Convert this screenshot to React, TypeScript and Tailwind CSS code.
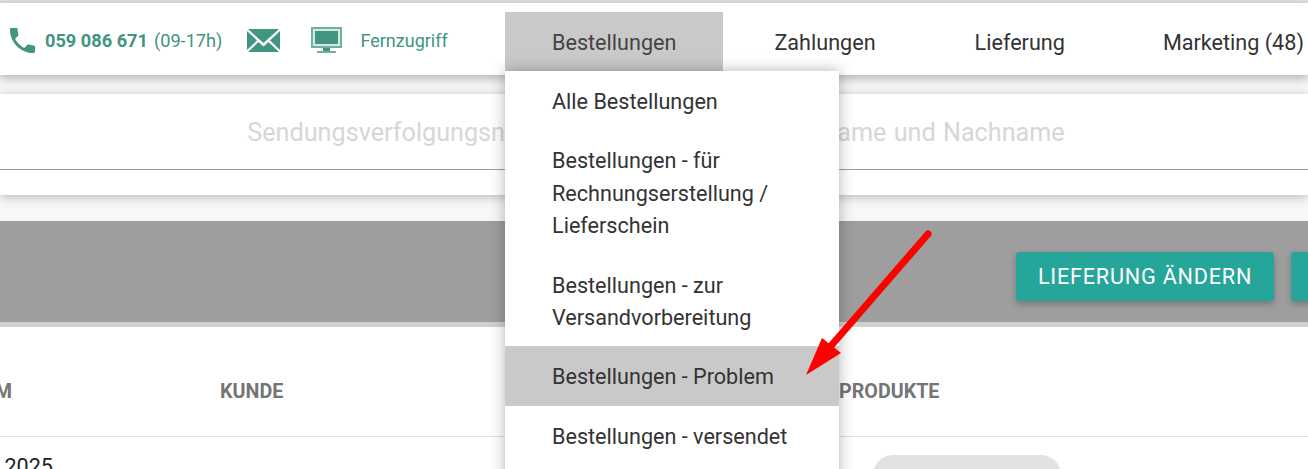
import React from 'react';

const menuItems = [
    { label: ['Alle Bestellungen'], pad: 'pt-[15px] pb-[13px] leading-[32px]' },
    { label: ['Bestellungen - für', 'Rechnungserstellung /', 'Lieferschein'], pad: 'pt-[14px] pb-[12.5px] leading-[32.5px]' },
    { label: ['Bestellungen - zur', 'Versandvorbereitung'], pad: 'pt-[15px] pb-[12px] leading-[32px]' },
    { label: ['Bestellungen - Problem'], pad: 'pt-[15px] pb-[13px] leading-[32px]', active: true },
    { label: ['Bestellungen - versendet'], pad: 'pt-[15px] pb-[13px] leading-[32px]' },
];

function PhoneIcon() {
    return (
        <svg viewBox="3 3 18 18" className="-mt-[1px] w-[25px] h-[25px] fill-[#419581]">
            <path d="M6.62 10.79c1.44 2.83 3.76 5.14 6.59 6.59l2.2-2.2c.27-.27.67-.36 1.02-.24 1.12.37 2.33.57 3.57.57.55 0 1 .45 1 1V20c0 .55-.45 1-1 1-9.39 0-17-7.61-17-17 0-.55.45-1 1-1h3.5c.55 0 1 .45 1 1 0 1.25.2 2.45.57 3.57.11.35.03.74-.25 1.02l-2.2 2.2z" />
        </svg>
    );
}

function MailIcon() {
    return (
        <svg viewBox="0 0 33 25" className="w-[33px] h-[25px] fill-[#419581]">
            <path d="M1 1h31L16.5 15z" />
            <path d="M0 3l10 9.5L0 22z" />
            <path d="M33 3L23 12.5 33 22z" />
            <path d="M11.5 14l5 4.5 5-4.5L32 24H1z" />
        </svg>
    );
}

function MonitorIcon() {
    return (
        <svg viewBox="0 0 31 26" className="-mt-[2px] w-[31px] h-[26px]">
            <rect x="0" y="0" width="31" height="21" fill="#6fb0a0" />
            <rect x="2" y="2" width="27" height="17" fill="#d6e8e3" />
            <rect x="4" y="4" width="23" height="13" fill="#419581" />
            <rect x="12" y="21" width="7" height="3" fill="#419581" />
            <rect x="6" y="24" width="19" height="2" fill="#6fb0a0" />
        </svg>
    );
}

export default function App() {
    return (
        <div className="relative h-[469px] overflow-hidden bg-[#f7f7f7] font-['Roboto',sans-serif] text-[#333]">
            <div className="h-[3px] bg-[#e2e2e2]" />

            <header className="relative z-10 flex h-[72px] bg-white shadow-[0_3px_10px_rgba(0,0,0,0.3)]">
                <div className="flex w-[505px] shrink-0 items-center pl-[10px] pt-[3px] text-[18.2px] text-[#419581]">
                    <PhoneIcon />
                    <span className="ml-[10px] font-bold whitespace-nowrap">059 086 671</span>
                    <span className="ml-[6px] whitespace-nowrap">(09-17h)</span>
                    <span className="ml-[25px]"><MailIcon /></span>
                    <span className="ml-[31px]"><MonitorIcon /></span>
                    <span className="ml-[18px] text-[18px] whitespace-nowrap">Fernzugriff</span>
                </div>

                <nav className="flex shrink-0 gap-[5px] text-[21.6px] whitespace-nowrap">
                    <div className="relative -mr-[5px] mt-[9px] h-[59px] bg-[#c9c9c9] px-[47px] leading-[62px] text-[#444]">
                        Bestellungen
                        <ul className="absolute left-0 top-[59px] z-20 h-[420px] w-[334px] bg-white text-[#333] shadow-[0_0_14px_rgba(0,0,0,0.3)]">
                            {menuItems.map((item) => (
                                <li key={item.label[0]} className={`px-[47px] ${item.pad} ${item.active ? 'bg-[#c9c9c9]' : ''}`}>
                                    {item.label.map((line) => (
                                        <div key={line}>{line}</div>
                                    ))}
                                </li>
                            ))}
                        </ul>
                    </div>
                    <div className="ml-[4px] px-[47px] pt-[9px] leading-[62px]">Zahlungen</div>
                    <div className="px-[47px] pt-[9px] leading-[62px]">Lieferung</div>
                    <div className="-ml-[1px] px-[47px] pt-[9px] leading-[62px]">Marketing (48)</div>
                </nav>
            </header>

            <div className="mt-[19px] h-[101px] bg-white pt-[15px] shadow-[0_2px_10px_rgba(0,0,0,0.25)]">
                <input
                    readOnly
                    placeholder="Sendungsverfolgungsnummer, Kundennummer, Vorname und Nachname"
                    className="block h-[61px] w-full border-b border-[#9e9e9e] bg-transparent pb-[13px] pl-[4px] text-center text-[25.2px] [word-spacing:1px] outline-none placeholder:text-[#d6d6d6]"
                />
            </div>

            <div className="relative mt-[26px] flex h-[101px] items-start justify-end gap-[17px] bg-[#9e9e9e] pt-[31px]">
                <button className="h-[49px] w-[258px] shrink-0 rounded-[3px] bg-[#26a69a] pt-[2px] text-[21.6px] tracking-[0.8px] text-white uppercase shadow-[0_3px_6px_rgba(0,0,0,0.25)]">
                    Lieferung ändern
                </button>
                <button className="-mr-[241px] h-[49px] w-[258px] shrink-0 rounded-[3px] bg-[#26a69a] shadow-[0_3px_6px_rgba(0,0,0,0.25)]" />
            </div>
            <div className="h-[5px] bg-[#d0d0d0]" />

            <div className="bg-white">
                <div className="flex h-[110px] items-center border-b border-[#e2e2e2] pt-[21px] text-[19.7px] font-bold text-[#757575] uppercase">
                    <div className="flex w-[220px] shrink-0 justify-end pr-[208px] whitespace-nowrap">Datum</div>
                    <div className="w-[619px] shrink-0">Kunde</div>
                    <div>Produkte</div>
                </div>
                <div className="relative flex h-[40px] pt-[18px] text-[21.6px] leading-[24px] text-[#222]">
                    <div className="flex w-[220px] shrink-0 justify-end pr-[167px] whitespace-nowrap">12. Mai 2025</div>
                    <div className="ml-[653px] h-[40px] w-[188px] rounded-[24px] bg-[#e2e2e2]" />
                </div>
            </div>

            <svg className="absolute left-0 top-0 z-30 h-[469px] w-[1308px]" viewBox="0 0 1308 469">
                <path d="M928 234L830 347" stroke="#ff0000" strokeWidth="7" strokeLinecap="round" fill="none" />
                <path d="M806 375L822 338L841 353z" fill="#ff0000" />
            </svg>
        </div>
    );
}
